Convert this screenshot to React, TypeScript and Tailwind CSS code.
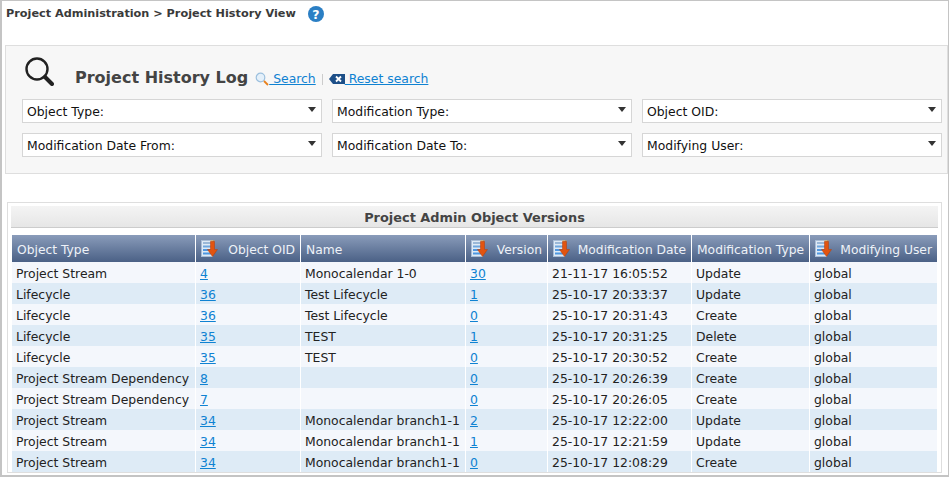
const font = "font-['DejaVu_Sans',Verdana,sans-serif]";

const rows = [
  ["Project Stream", "4", "Monocalendar 1-0", "30", "21-11-17 16:05:52", "Update", "global"],
  ["Lifecycle", "36", "Test Lifecycle", "1", "25-10-17 20:33:37", "Update", "global"],
  ["Lifecycle", "36", "Test Lifecycle", "0", "25-10-17 20:31:43", "Create", "global"],
  ["Lifecycle", "35", "TEST", "1", "25-10-17 20:31:25", "Delete", "global"],
  ["Lifecycle", "35", "TEST", "0", "25-10-17 20:30:52", "Create", "global"],
  ["Project Stream Dependency", "8", "", "0", "25-10-17 20:26:39", "Create", "global"],
  ["Project Stream Dependency", "7", "", "0", "25-10-17 20:26:05", "Create", "global"],
  ["Project Stream", "34", "Monocalendar branch1-1", "2", "25-10-17 12:22:00", "Update", "global"],
  ["Project Stream", "34", "Monocalendar branch1-1", "1", "25-10-17 12:21:59", "Update", "global"],
  ["Project Stream", "34", "Monocalendar branch1-1", "0", "25-10-17 12:08:29", "Create", "global"],
];

function SortIcon() {
  return (
    <svg width="17" height="17" viewBox="0 0 17 17" className="shrink-0">
      <rect x="0.5" y="0.5" width="11" height="16" fill="#dfeaf6" stroke="#a9bdd6" />
      <rect x="2" y="2" width="8" height="2" fill="#9ab8d8" />
      <rect x="2" y="5.5" width="8" height="2" fill="#6ea6de" />
      <rect x="2" y="9" width="8" height="2" fill="#4f97e0" />
      <rect x="2" y="12.5" width="8" height="2" fill="#4f97e0" />
      <path d="M9.5 0.5h4v1h-4z" fill="#f0a030" />
      <path d="M9.5 1.5h4v8h3l-5 7-5-7h3z" fill="#e2540f" stroke="#b53c08" strokeWidth="0.5" />
    </svg>
  );
}

function Select({ label }: { label: string }) {
  return (
    <div className="box-border flex h-6 w-[300px] items-center justify-between border border-[#d6d6d6] bg-white pl-1 pr-[5px] text-[12.4px] leading-none text-[#111]">
      <span className="pt-[2px]">{label}</span>
      <span className="mb-1 h-0 w-0 border-x-4 border-t-[5px] border-x-transparent border-t-[#333]" />
    </div>
  );
}

function Th({ label, sort, w }: { label: string; sort?: boolean; w: string }) {
  return (
    <th className={`${w} h-[27px] bg-gradient-to-b from-[#8a9cba] to-[#4b6186] p-0 text-[12.3px] font-normal text-[#eef2f8]`}>
      <div className={`flex items-center pl-[5px] pr-[5px] ${sort ? "justify-between" : ""}`}>
        {sort && <SortIcon />}
        <span className="whitespace-nowrap pt-[3px]">{label}</span>
      </div>
    </th>
  );
}

export default function App() {
  return (
    <div className={`${font} box-border h-[477px] w-[949px] overflow-hidden border-t border-r border-b-2 border-l-2 border-[#c4c4c4] bg-white`}>
      <div className="flex h-[25px] items-center pl-1 text-[11.25px] font-bold text-[#3a3a3a]">
        <span className="pt-[2px]">Project Administration &gt; Project History View</span>
        <svg width="16" height="16" viewBox="0 0 16 16" className="ml-[12px]">
          <circle cx="8" cy="8" r="8" fill="#2b7fc4" />
          <text x="8" y="12.5" textAnchor="middle" fontSize="12.5" fontWeight="bold" fill="#fff">?</text>
        </svg>
      </div>

      <div className="ml-[3px] mt-[19px] box-border h-[129px] border border-[#dedede] bg-[#f7f7f7] pl-4 pt-[11px]">
        <div className="flex h-[42px] items-start">
          <svg width="29" height="29" viewBox="0 0 29 29" className="ml-[3px] shrink-0">
            <circle cx="12" cy="12" r="10.5" fill="none" stroke="#222" strokeWidth="2.4" />
            <path d="M20 20l7 7" stroke="#222" strokeWidth="4" strokeLinecap="round" />
          </svg>
          <div className="ml-[21px] mt-[9px] flex h-6 items-center">
            <span className="text-[16px] leading-[24px] font-bold text-[#444]">Project History Log</span>
            <span className="ml-[7px] mt-[3px] flex items-center text-[12.4px] text-[#0f82d2]">
              <a className="flex items-center underline">
                <svg width="14" height="14" viewBox="0 0 14 14" className="shrink-0">
                  <circle cx="5.5" cy="5.5" r="4.3" fill="#e4f0fa" stroke="#9cc0de" strokeWidth="1.2" />
                  <path d="M9 9l4 4" stroke="#e8801c" strokeWidth="1.8" />
                </svg>
                <span className="whitespace-pre"> Search</span>
              </a>
              <span className="mx-[6px] h-[11px] w-px bg-[#ccc]" />
              <a className="flex items-center underline">
                <svg width="16" height="10" viewBox="0 0 16 10" className="shrink-0">
                  <path d="M0 5l4-5h12v10H4z" fill="#1d4f88" />
                  <path d="M7 2.5l5 5M12 2.5l-5 5" stroke="#fff" strokeWidth="1.8" />
                </svg>
                <span className="whitespace-pre"> Reset search</span>
              </a>
            </span>
          </div>
        </div>
        <div className="flex flex-col gap-[10px]">
          <div className="flex gap-[10px]">
            <Select label="Object Type:" />
            <Select label="Modification Type:" />
            <Select label="Object OID:" />
          </div>
          <div className="flex gap-[10px]">
            <Select label="Modification Date From:" />
            <Select label="Modification Date To:" />
            <Select label="Modifying User:" />
          </div>
        </div>
      </div>

      <div className="ml-[5px] mt-[28px] box-border w-[935px] border border-[#dedede] px-[3px] pt-[3px]">
        <div className="box-border h-[22px] border-b border-[#ccc] bg-gradient-to-b from-[#f4f4f4] to-[#e6e6e6] text-center text-[12.9px] leading-[23px] font-bold text-[#444]">
          Project Admin Object Versions
        </div>
        <table className="ml-px mt-[7px] w-[925px] table-fixed border-separate border-spacing-0 text-[12.4px] leading-[18px] text-[#222]">
          <thead>
            <tr>
              <Th w="w-[184px] border-r border-white" label="Object Type" />
              <Th w="w-[105px] border-r border-white" label="Object OID" sort />
              <Th w="w-[165px] border-r border-white" label="Name" />
              <Th w="w-[82px] border-r border-white" label="Version" sort />
              <Th w="w-[144px] border-r border-white" label="Modification Date" sort />
              <Th w="w-[118px] border-r border-white" label="Modification Type" />
              <Th w="w-[127px]" label="Modifying User" sort />
            </tr>
          </thead>
          <tbody>
            {rows.map((r, i) => (
              <tr key={i} className={i % 2 === 0 ? "bg-[#f4f7fc]" : "bg-[#deebf6]"}>
                {r.map((c, j) => (
                  <td
                    key={j}
                    className={`h-[21px] whitespace-nowrap p-0 pl-1 pt-[3px] ${j < 6 ? "border-r border-white" : ""} ${j === 1 || j === 3 ? "text-[#0f82d2] underline" : ""}`}
                  >
                    {c}
                  </td>
                ))}
              </tr>
            ))}
          </tbody>
        </table>
      </div>
    </div>
  );
}
